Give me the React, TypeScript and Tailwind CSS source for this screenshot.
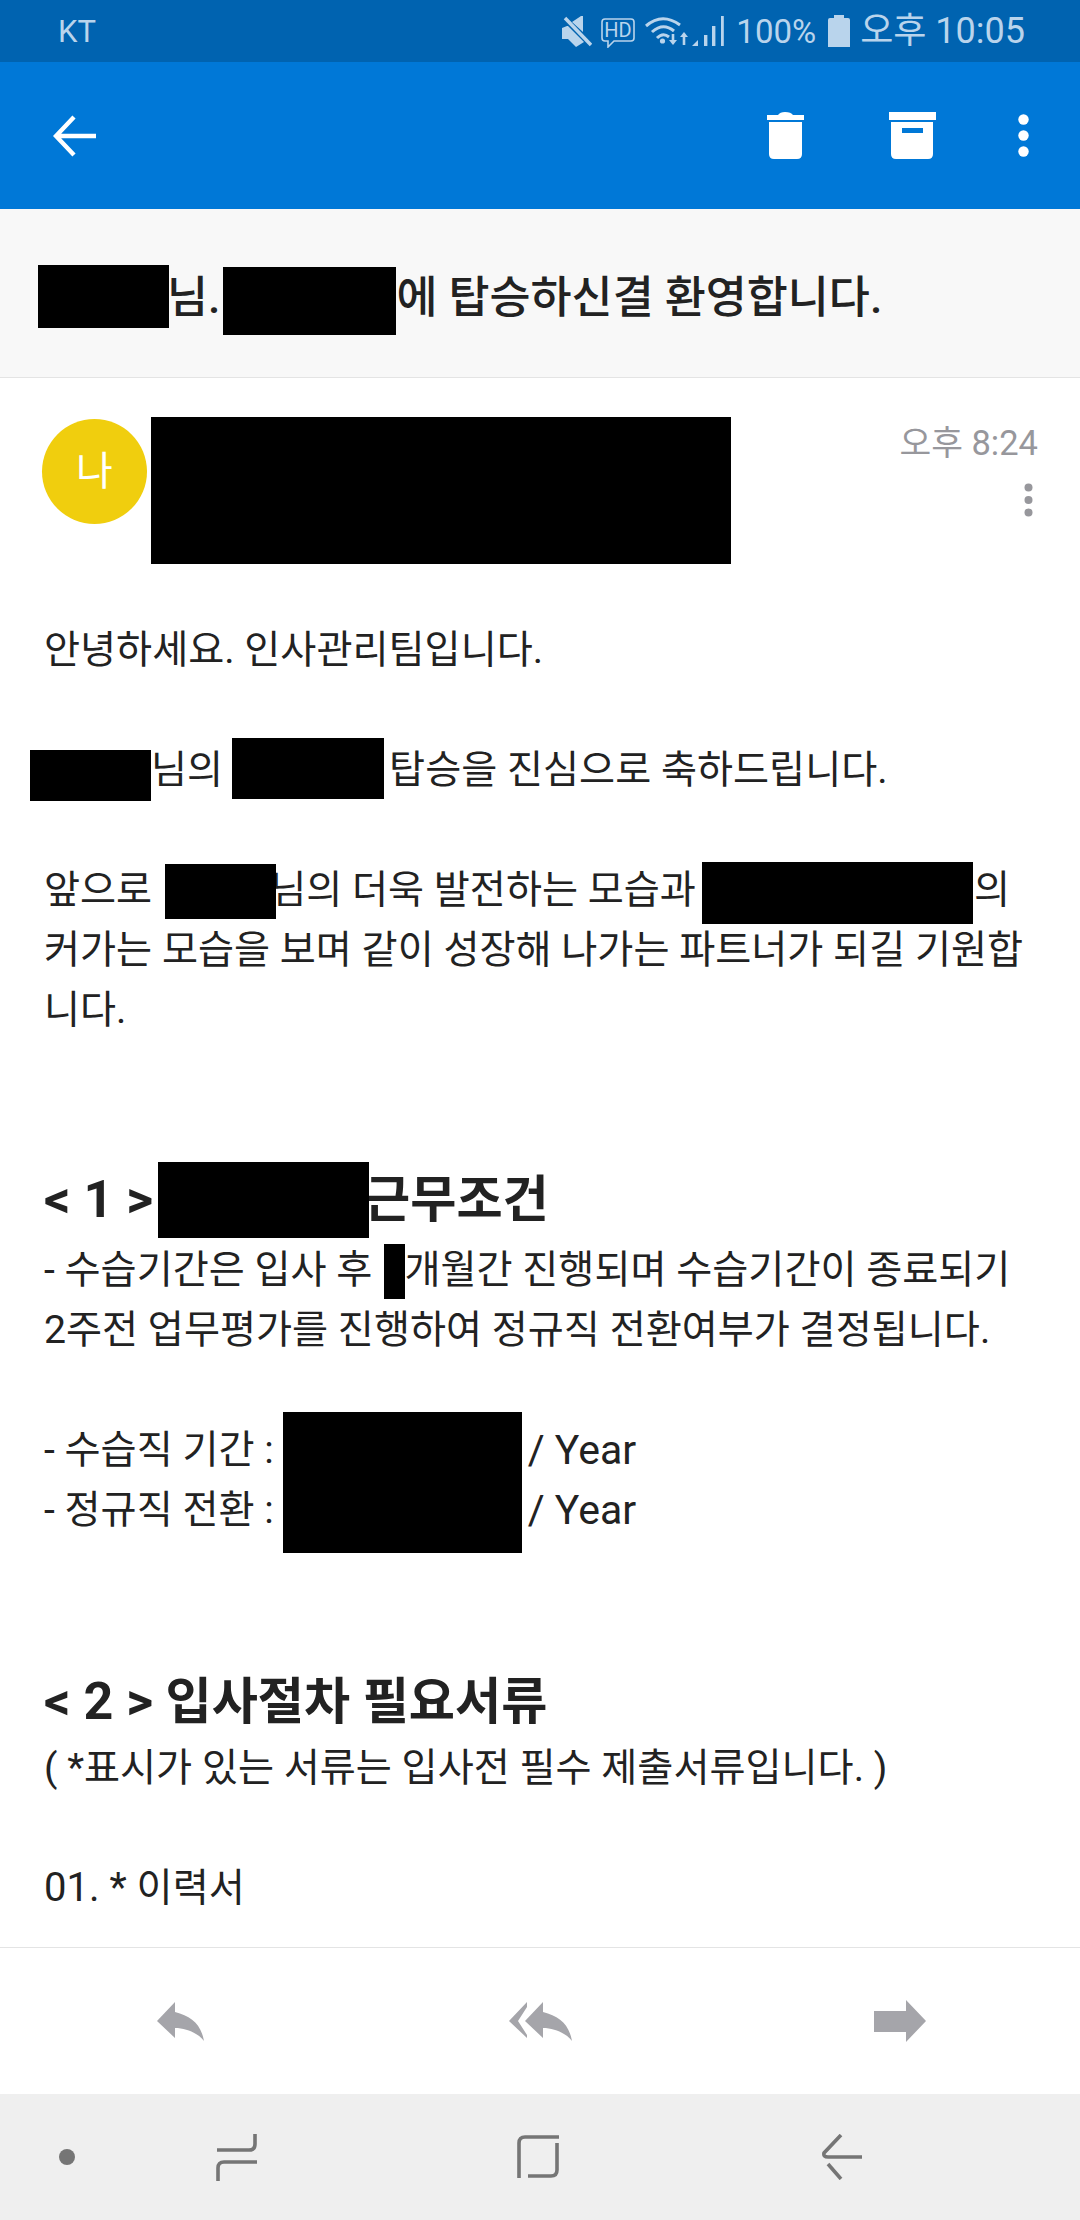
import React from "react";

const Bar = ({ className }: { className: string }) => (
  <div className={"relative z-10 shrink-0 bg-black " + className} />
);

const Line = ({ children, className = "" }: { children?: React.ReactNode; className?: string }) => (
  <div className={"flex h-[60px] items-center whitespace-pre text-[39.2px] leading-[60px] " + className}>{children}</div>
);

const H = ({ children, className = "" }: { children?: React.ReactNode; className?: string }) => (
  <div className={"flex items-center whitespace-pre text-[50.2px] font-bold leading-[80px] " + className}>{children}</div>
);

const Mute = () => (
  <svg width="30" height="31" viewBox="0 0 30 31" className="shrink-0">
    <path d="M0 12 L5 10 L6 10 L22 26 L14 31 L6 23 H0 Z M10 6 L19 0 H21 V16 Z" fill="#b9d4ec" />
    <path d="M3 2 L29 29" stroke="#b9d4ec" strokeWidth="3.5" />
  </svg>
);

const HD = () => (
  <svg width="34" height="30" viewBox="0 0 34 30" className="shrink-0">
    <path d="M4 1 H30 Q33 1 33 4 V20 Q33 23 30 23 H13 L7 29 V23 H4 Q1 23 1 20 V4 Q1 1 4 1 Z" fill="none" stroke="#b9d4ec" strokeWidth="1.6" />
    <text x="17" y="19" textAnchor="middle" fontFamily="Roboto" fontSize="20" fill="#b9d4ec">HD</text>
  </svg>
);

const Wifi = () => (
  <svg width="43" height="30" viewBox="0 0 43 30" className="shrink-0">
    <g fill="none" stroke="#b9d4ec" strokeWidth="3">
      <path d="M1 10 Q17 -4 35 9" />
      <path d="M7 16 Q18 6 29 15" />
      <path d="M12 22 Q18 16 24 21" />
    </g>
    <circle cx="17.5" cy="25" r="2.6" fill="#b9d4ec" />
    <path d="M28 18 V25" stroke="#b9d4ec" strokeWidth="2.6" />
    <path d="M24 24 H32 L28 29 Z" fill="#b9d4ec" />
    <path d="M39 20 V29" stroke="#b9d4ec" strokeWidth="2.6" />
    <path d="M35 21 H43 L39 16 Z" fill="#b9d4ec" />
  </svg>
);

const Signal = () => (
  <svg width="32" height="32" viewBox="0 0 32 32" className="shrink-0">
    <path d="M0 31 L6 25 V31 Z" fill="#b9d4ec" />
    <rect x="12" y="20" width="3.4" height="11" fill="#b9d4ec" />
    <rect x="20" y="11" width="3.4" height="20" fill="#b9d4ec" />
    <rect x="29" y="1" width="2.8" height="30" fill="#b9d4ec" />
  </svg>
);

const Battery = () => (
  <svg width="22" height="32" viewBox="0 0 22 32" className="shrink-0">
    <path d="M6 0 H16 V3 H20 Q22 3 22 5 V32 H0 V5 Q0 3 2 3 H6 Z" fill="#b9d4ec" />
  </svg>
);

export default function App() {
  return (
    <div className="flex h-[2220px] w-[1080px] flex-col overflow-hidden bg-white font-[Roboto,'Noto_Sans_CJK_KR',sans-serif] text-[#222222]">
      {/* status bar */}
      <div className="flex h-[62px] shrink-0 items-center bg-[#0063b0] pl-[58px] pr-[55px] text-[#b9d4ec]">
        <span className="text-[31px] leading-none">KT</span>
        <div className="ml-auto flex items-center">
          <Mute />
          <div className="ml-[9px] mt-[3px]"><HD /></div>
          <div className="ml-[10px]"><Wifi /></div>
          <div className="ml-[4px]"><Signal /></div>
          <span className="ml-[12px] text-[33px] leading-none">100%</span>
          <div className="ml-[12px]"><Battery /></div>
          <span className="ml-[10px] text-[36px] leading-none">오후 10:05</span>
        </div>
      </div>

      {/* toolbar */}
      <div className="flex h-[147px] shrink-0 items-center bg-[#0078d7] pl-[53px] pr-[51px]">
        <svg width="44" height="42" viewBox="0 0 44 42">
          <path d="M21 2 L3 21 L21 40 M3 21 H43" fill="none" stroke="#ffffff" strokeWidth="4.4" />
        </svg>
        <svg width="37" height="47" viewBox="0 0 37 47" className="ml-auto">
          <path d="M0 3 H11 Q13 0 18 0 Q24 0 26 3 H37 V8 H0 Z" fill="#ffffff" />
          <path d="M2 10 H35 V42 Q35 47 30 47 H7 Q2 47 2 42 Z" fill="#ffffff" />
        </svg>
        <svg width="47" height="47" viewBox="0 0 47 47" className="ml-[85px]">
          <rect x="0" y="0" width="47" height="8" fill="#ffffff" />
          <path d="M2 10 H44 V42 Q44 47 39 47 H7 Q2 47 2 42 Z M13 16 V21 H34 V16 Z" fill="#ffffff" fillRule="evenodd" />
        </svg>
        <svg width="11" height="43" viewBox="0 0 11 43" className="ml-[82px]">
          <circle cx="5.5" cy="5.5" r="5.2" fill="#ffffff" />
          <circle cx="5.5" cy="21.5" r="5.2" fill="#ffffff" />
          <circle cx="5.5" cy="37.5" r="5.2" fill="#ffffff" />
        </svg>
      </div>

      {/* subject */}
      <div className="flex h-[169px] shrink-0 items-start whitespace-pre border-b border-[#e4e4e4] bg-[#f8f8f8] pl-[38px] text-[44.6px] font-medium leading-[60px]">
        <Bar className="mt-[56px] h-[63px] w-[131px]" />
        <span className="-ml-[2px] mt-[59px]">님.</span>
        <Bar className="ml-[3px] mt-[58px] h-[68px] w-[173px]" />
        <span className="mt-[59px]">에 탑승하신결 환영합니다.</span>
      </div>

      {/* sender */}
      <div className="flex shrink-0 items-start pl-[42px] pr-[42px] pt-[39px]">
        <div className="mt-[2px] flex h-[105px] w-[105px] shrink-0 items-center justify-center rounded-full bg-[#f0ce0e] text-[40px] leading-none text-white">
          나
        </div>
        <Bar className="ml-[4px] h-[147px] w-[580px]" />
        <div className="ml-auto flex flex-col items-end">
          <span className="mt-[6px] text-[34.5px] leading-[40px] text-[#97979c]">오후 8:24</span>
          <svg width="9" height="34" viewBox="0 0 9 34" className="mr-[5px] mt-[20px]">
            <circle cx="4.5" cy="4.5" r="4" fill="#97979c" />
            <circle cx="4.5" cy="17" r="4" fill="#97979c" />
            <circle cx="4.5" cy="29.5" r="4" fill="#97979c" />
          </svg>
        </div>
      </div>

      {/* body */}
      <div className="min-h-0 flex-1 overflow-hidden pl-[44px] pt-[56px]">
        <Line>안녕하세요. 인사관리팀입니다.</Line>
        <Line />
        <Line>
          <Bar className="-ml-[14px] mt-[11px] h-[51px] w-[121px]" />
          <span className="ml-[0px]">님의</span>
          <Bar className="-mt-[3px] ml-[9px] h-[61px] w-[152px]" />
          <span className="ml-[5px]">탑승을 진심으로 축하드립니다.</span>
        </Line>
        <Line />
        <Line>
          <span>앞으로</span>
          <Bar className="ml-[13px] mt-[3px] h-[55px] w-[111px]" />
          <span className="-ml-[6px]">님의 더욱 발전하는 모습과</span>
          <Bar className="ml-[6px] mt-[6px] h-[62px] w-[271px]" />
          <span className="ml-[1px]">의</span>
        </Line>
        <Line>커가는 모습을 보며 같이 성장해 나가는 파트너가 되길 기원합</Line>
        <Line>니다.</Line>
        <Line />
        <Line />
        <H className="h-[80px]">
          <span className="text-[52px]">{"< 1 >"}</span>
          <Bar className="ml-[5px] h-[76px] w-[211px]" />
          <span className="-ml-[5px]">근무조건</span>
        </H>
        <Line>
          <span>- 수습기간은 입사 후</span>
          <Bar className="ml-[12px] mt-[3px] h-[55px] w-[21px]" />
          <span className="-ml-[1px]">개월간 진행되며 수습기간이 종료되기</span>
        </Line>
        <Line>2주전 업무평가를 진행하여 정규직 전환여부가 결정됩니다.</Line>
        <Line />
        <Line>
          <span>- 수습직 기간 :</span>
          <Bar className="ml-[9px] mt-[65px] h-[141px] w-[239px]" />
          <span className="ml-[6px] text-[41px]">/ Year</span>
        </Line>
        <Line>
          <span>- 정규직 전환 :</span>
          <span className="ml-[254px] text-[41px]">/ Year</span>
        </Line>
        <Line />
        <Line />
        <H className="h-[78px]">
          <span className="mt-[5px] text-[52px]">{"< 2 >"}</span>
          <span className="mt-[5px]"> 입사절차 필요서류</span>
        </H>
        <Line>( *표시가 있는 서류는 입사전 필수 제출서류입니다. )</Line>
        <Line />
        <Line>
          <span className="text-[40px]">01. * </span>
          <span>이력서</span>
        </Line>
      </div>

      {/* actions */}
      <div className="flex h-[147px] shrink-0 items-center border-t border-[#e4e4e4] bg-white pl-[157px]">
        <svg width="47" height="39" viewBox="0 0 47 39">
          <path d="M0 19 L18 0 V10 C34 14 44 22 47 39 C42 32 30 26 18 26 V36 Z" fill="#a5a5aa" />
        </svg>
        <svg width="63" height="39" viewBox="0 0 63 39" className="ml-[305px]">
          <path d="M0 19 L18 0 V5 L9 19 L18 33 V36 Z" fill="#a5a5aa" />
          <path d="M16 19 L34 0 V10 C50 14 60 22 63 39 C58 32 46 26 34 26 V36 Z" fill="#a5a5aa" />
        </svg>
        <svg width="52" height="42" viewBox="0 0 52 42" className="ml-[302px]">
          <path d="M0 11 H32 V0 L52 21 L32 42 V32 H0 Z" fill="#a5a5aa" />
        </svg>
      </div>

      {/* navigation bar */}
      <div className="flex h-[126px] shrink-0 items-center bg-[#efefef] pl-[59px]">
        <svg width="16" height="16" viewBox="0 0 16 16">
          <circle cx="8" cy="8" r="8" fill="#757575" />
        </svg>
        <svg width="42" height="48" viewBox="0 0 42 48" className="ml-[141px]" fill="none" stroke="#757575" strokeWidth="3.6">
          <path d="M39 1 V11 Q39 17 33 17 H1" />
          <path d="M41 29 H8 Q2 29 2 35 V48" />
        </svg>
        <svg width="42" height="46" viewBox="0 0 42 46" className="ml-[259px]" fill="none" stroke="#757575" strokeWidth="3.6">
          <path d="M42 3 H8 Q2 3 2 9 V44" />
          <path d="M40 9 V36 Q40 42 34 42 H11" />
        </svg>
        <svg width="42" height="46" viewBox="0 0 42 46" className="ml-[261px]" fill="none" stroke="#757575" strokeWidth="3.6">
          <path d="M21 1 L4 19 Q3 23 8 23 H42" />
          <path d="M8 30 L21 45" />
        </svg>
      </div>
    </div>
  );
}
